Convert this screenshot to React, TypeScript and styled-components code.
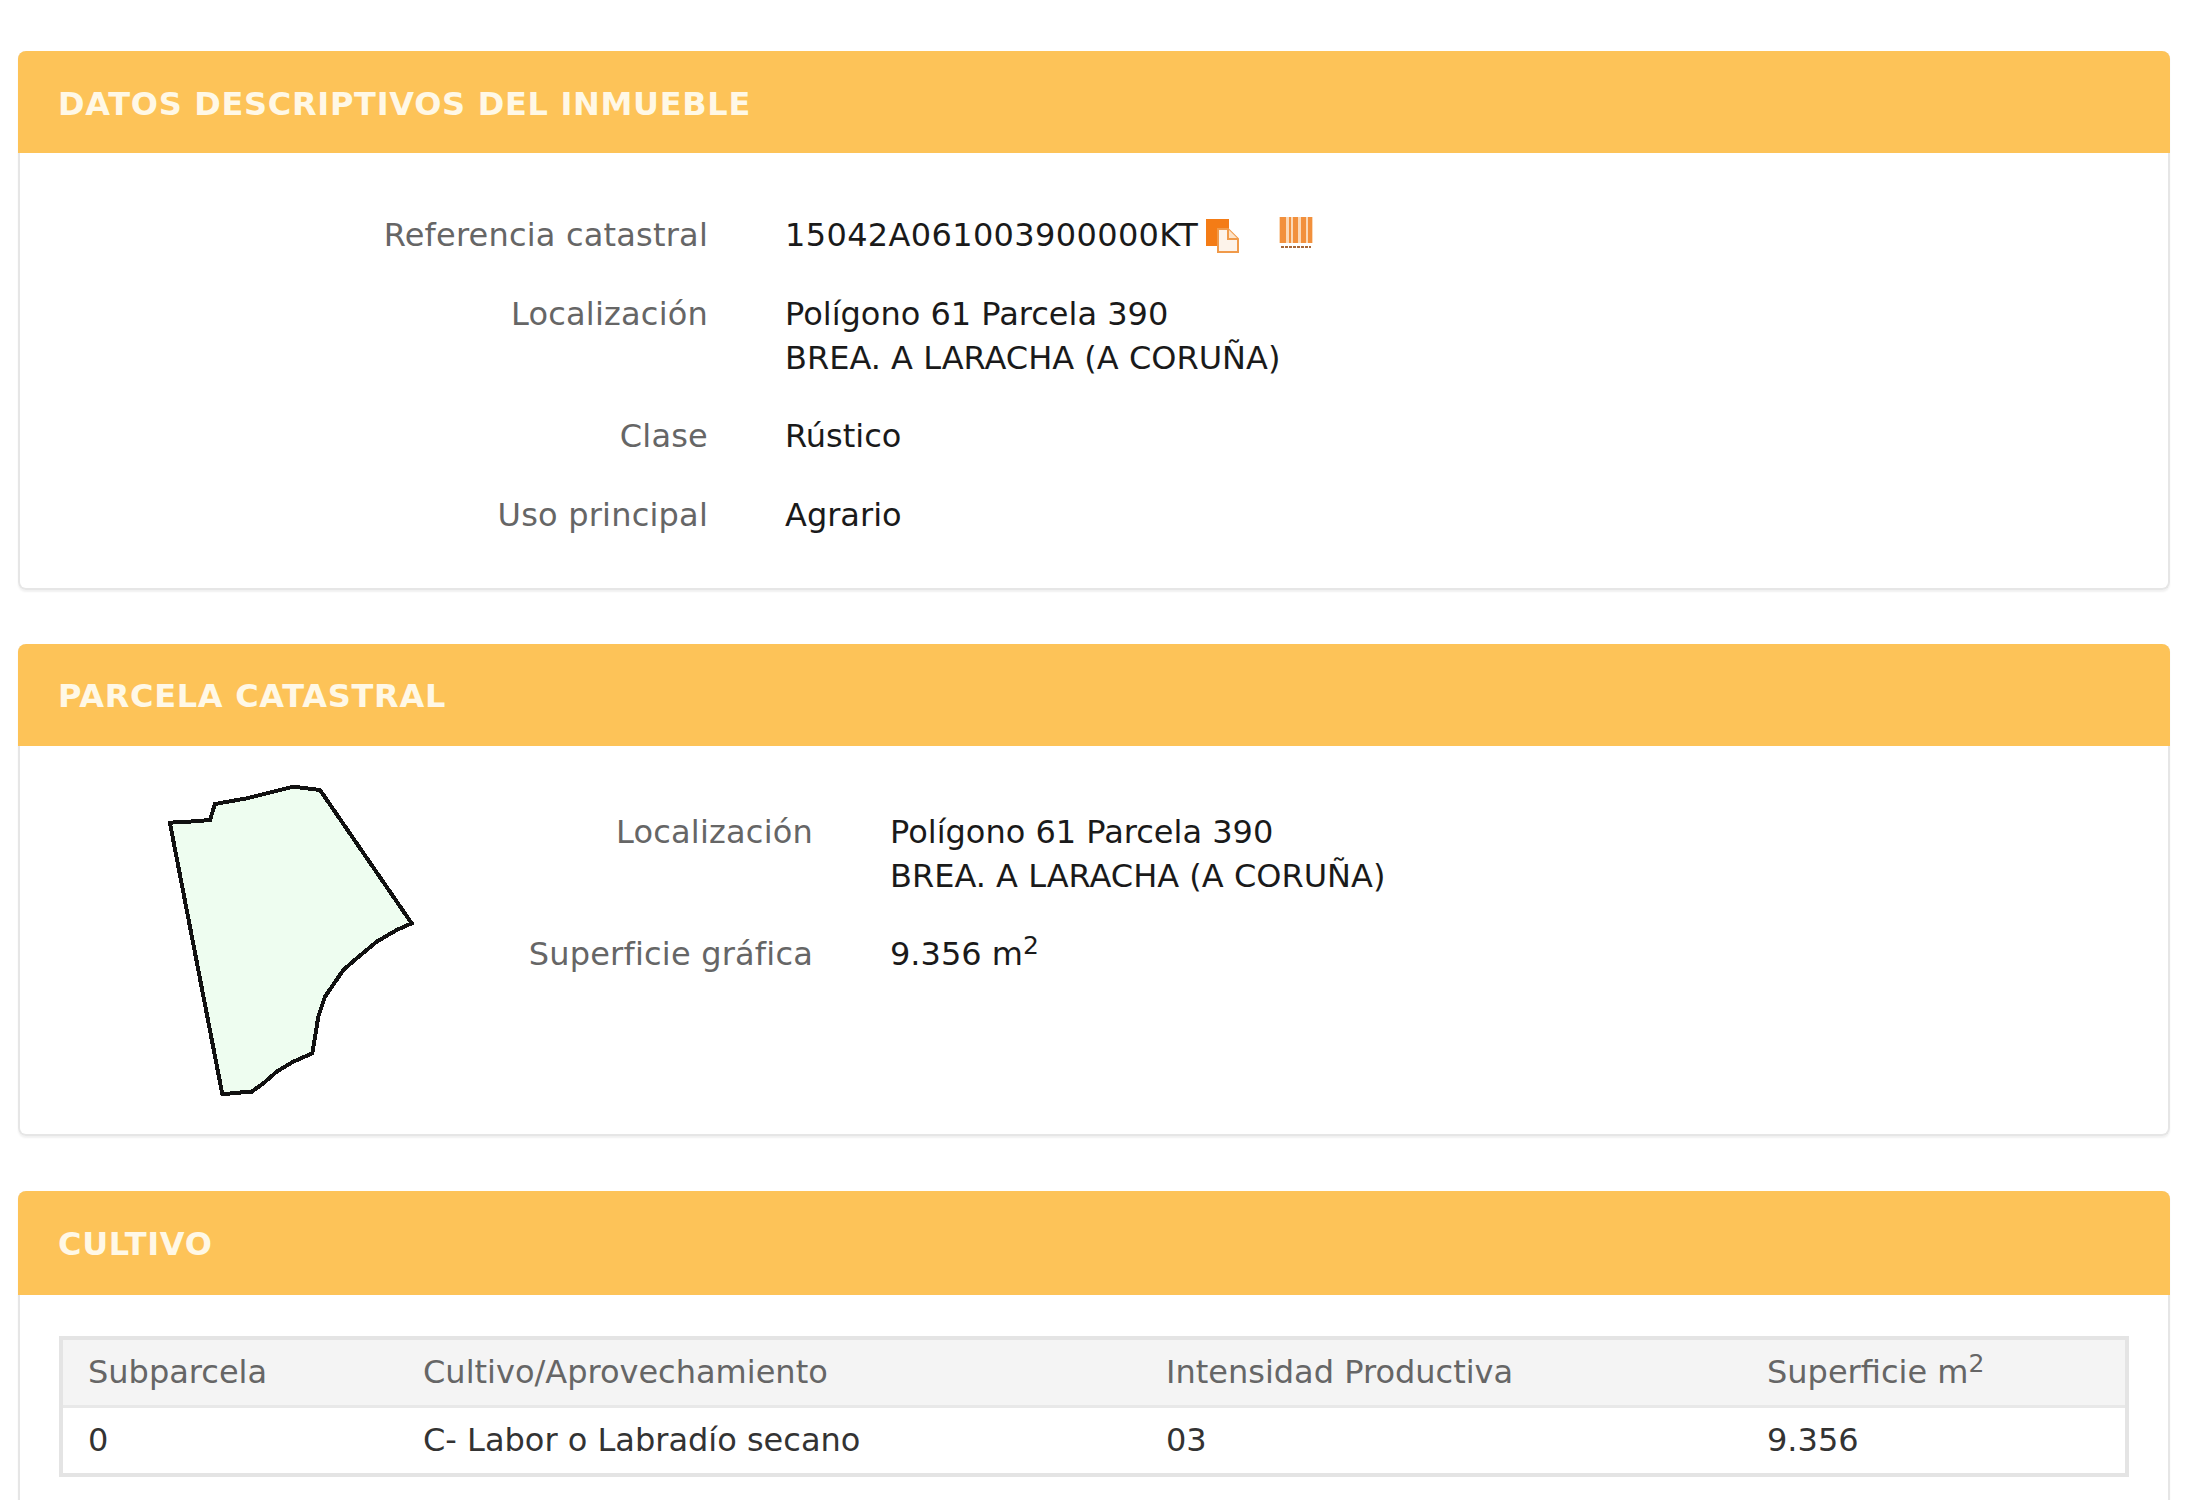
import styled, { createGlobalStyle } from 'styled-components'

const GlobalStyle = createGlobalStyle`
   html, body {
      margin: 0;
      height: 1500px;
      overflow: hidden;
      background: #fff;
   }
   body {
      font-family: 'DejaVu Sans', Verdana, sans-serif;
      font-size: 32px;
      line-height: 44px;
   }
`

const Page = styled.div`
   padding: 52px 19px 0 18px;
`
const Panel = styled.section`
   border: 2px solid #e6e6e6;
   border-top: 0;
   border-radius: 8px;
   box-shadow: 0 2px 2px rgba(0, 0, 0, 0.06);
   margin-bottom: 55px;
`
const CultivoPanel = styled(Panel)`
   margin-top: 56px;
`
const PanelHeader = styled.h2<{ $height: number }>`
   display: flex;
   align-items: center;
   height: ${(p) => p.$height}px;
   box-sizing: border-box;
   margin: -1px -2px 0;
   padding: 3px 0 0 40px;
   background: #fdc358;
   border-radius: 8px 8px 0 0;
   color: #fff8e6;
   font-size: 32px;
   font-weight: 700;
   letter-spacing: 0.7px;
`
const DetailBody = styled.div`
   padding: 60px 0 51px;
`
const ParcelBody = styled.div`
   display: flex;
   padding: 14px 0 24px 110px;
`
const ParcelShape = styled.svg`
   width: 320px;
   height: 350px;
   flex: none;
`
const Fields = styled.dl<{ $labelWidth: number }>`
   display: grid;
   grid-template-columns: ${(p) => p.$labelWidth}px 1fr;
   column-gap: 77px;
   row-gap: 34.5px;
   margin: 0;
   align-content: start;
`
const ParcelFields = styled(Fields)`
   padding-top: 50px;
`
const Label = styled.dt`
   color: #666;
   text-align: right;
   letter-spacing: 0.2px;
`
const Value = styled.dd`
   margin: 0;
   color: #1a1a1a;
`
const RefValue = styled(Value)`
   display: flex;
   align-items: center;
   letter-spacing: 0.35px;
`
const RefIcon = styled.svg`
   width: 36px;
   height: 36px;
   margin-left: 7px;
   flex: none;
`
const BarcodeIcon = styled(RefIcon)`
   margin-left: 37px;
   margin-top: -4px;
`
const Sup = styled.sup`
   font-size: 25px;
   line-height: 0;
   vertical-align: 11px;
`
const TableWrap = styled.div`
   padding: 41px 39px 40px 39px;
`
const Table = styled.table`
   width: 100%;
   border-collapse: collapse;
   border: 4px solid #e4e4e4;
   table-layout: fixed;
`
const Th = styled.th<{ $width?: number }>`
   width: ${(p) => (p.$width ? `${p.$width}px` : 'auto')};
   height: 65px;
   padding: 0 0 0 25px;
   background: #f4f4f4;
   border-bottom: 3px solid #e8e8e8;
   color: #666;
   font-weight: 400;
   text-align: left;
`
const Td = styled.td`
   height: 65px;
   padding: 0 0 0 25px;
   color: #333;
`

const parcelPoints =
   '120,188 178,185 240,180 255,132 350,115 490,80 570,90 845,490 800,510 740,545 680,595 640,630 585,710 565,770 547,880 490,905 440,935 400,970 365,995 325,998 277,1003 120,190'

const App = () => {
   return (
      <Page>
         <GlobalStyle />
         <Panel>
            <PanelHeader $height={102}>DATOS DESCRIPTIVOS DEL INMUEBLE</PanelHeader>
            <DetailBody>
               <Fields $labelWidth={688}>
                  <Label>Referencia catastral</Label>
                  <RefValue>
                     15042A061003900000KT
                     <RefIcon viewBox="0 0 36 36">
                        <rect x="1" y="2" width="23" height="27" fill="#f47c16" />
                        <path d="M13 12h10l10 10v13H13z" fill="#fdf3ea" stroke="#f09a4a" strokeWidth="2" />
                        <path d="M23 12v10h10" fill="#fde3c8" stroke="#f09a4a" strokeWidth="2" />
                     </RefIcon>
                     <BarcodeIcon viewBox="0 0 36 36">
                        <rect x="1" y="2" width="34" height="26" fill="#fbd9b8" />
                        <path
                           d="M2 2h6v26H2zM11 2h2v26h-2zM15 2h5v26h-5zM23 2h5v26h-5zM30 2h4v26h-4z"
                           fill="#f2903c"
                        />
                        <path d="M3 32h30" stroke="#a8693a" strokeWidth="2" strokeDasharray="3 1" />
                     </BarcodeIcon>
                  </RefValue>
                  <Label>Localización</Label>
                  <Value>
                     Polígono 61 Parcela 390
                     <br />
                     BREA. A LARACHA (A CORUÑA)
                  </Value>
                  <Label>Clase</Label>
                  <Value>Rústico</Value>
                  <Label>Uso principal</Label>
                  <Value>Agrario</Value>
               </Fields>
            </DetailBody>
         </Panel>
         <Panel>
            <PanelHeader $height={102}>PARCELA CATASTRAL</PanelHeader>
            <ParcelBody>
               <ParcelShape viewBox="0 0 960 1050" shapeRendering="crispEdges">
                  <polygon points={parcelPoints} fill="#eefdf0" stroke="#111" strokeWidth="12" />
               </ParcelShape>
               <ParcelFields $labelWidth={363}>
                  <Label>Localización</Label>
                  <Value>
                     Polígono 61 Parcela 390
                     <br />
                     BREA. A LARACHA (A CORUÑA)
                  </Value>
                  <Label>Superficie gráfica</Label>
                  <Value>
                     9.356 m<Sup>2</Sup>
                  </Value>
               </ParcelFields>
            </ParcelBody>
         </Panel>
         <CultivoPanel>
            <PanelHeader $height={104}>CULTIVO</PanelHeader>
            <TableWrap>
               <Table>
                  <thead>
                     <tr>
                        <Th $width={310}>Subparcela</Th>
                        <Th $width={718}>Cultivo/Aprovechamiento</Th>
                        <Th $width={576}>Intensidad Productiva</Th>
                        <Th>
                           Superficie m<Sup>2</Sup>
                        </Th>
                     </tr>
                  </thead>
                  <tbody>
                     <tr>
                        <Td>0</Td>
                        <Td>C- Labor o Labradío secano</Td>
                        <Td>03</Td>
                        <Td>9.356</Td>
                     </tr>
                  </tbody>
               </Table>
            </TableWrap>
         </CultivoPanel>
      </Page>
   )
}

export default App
